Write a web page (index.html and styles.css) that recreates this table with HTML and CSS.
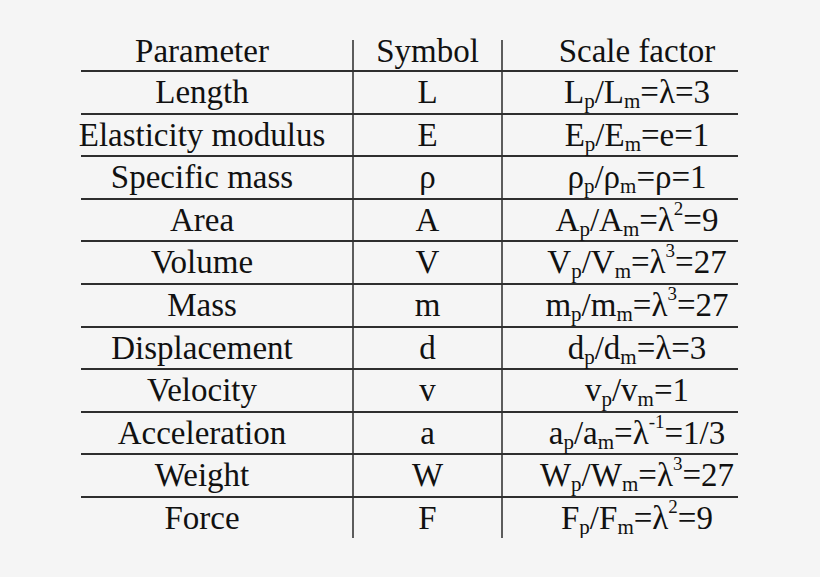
FILE: index.html
```html
<!DOCTYPE html>
<html>
<head>
<meta charset="utf-8">
<link rel="stylesheet" href="styles.css">
</head>
<body>
<div class="page">
  <div class="table">
    <div class="row head">
      <div class="cell c1">Parameter</div>
      <div class="cell c2">Symbol</div>
      <div class="cell c3">Scale factor</div>
    </div>
    <div class="row">
      <div class="cell c1">Length</div>
      <div class="cell c2">L</div>
      <div class="cell c3"><span>L<sub>p</sub>/L<sub>m</sub>=λ=3</span></div>
    </div>
    <div class="row">
      <div class="cell c1">Elasticity modulus</div>
      <div class="cell c2">E</div>
      <div class="cell c3"><span>E<sub>p</sub>/E<sub>m</sub>=e=1</span></div>
    </div>
    <div class="row">
      <div class="cell c1">Specific mass</div>
      <div class="cell c2">ρ</div>
      <div class="cell c3"><span>ρ<sub>p</sub>/ρ<sub>m</sub>=ρ=1</span></div>
    </div>
    <div class="row">
      <div class="cell c1">Area</div>
      <div class="cell c2">A</div>
      <div class="cell c3"><span>A<sub>p</sub>/A<sub>m</sub>=λ<sup>2</sup>=9</span></div>
    </div>
    <div class="row">
      <div class="cell c1">Volume</div>
      <div class="cell c2">V</div>
      <div class="cell c3"><span>V<sub>p</sub>/V<sub>m</sub>=λ<sup>3</sup>=27</span></div>
    </div>
    <div class="row">
      <div class="cell c1">Mass</div>
      <div class="cell c2">m</div>
      <div class="cell c3"><span>m<sub>p</sub>/m<sub>m</sub>=λ<sup>3</sup>=27</span></div>
    </div>
    <div class="row">
      <div class="cell c1">Displacement</div>
      <div class="cell c2">d</div>
      <div class="cell c3"><span>d<sub>p</sub>/d<sub>m</sub>=λ=3</span></div>
    </div>
    <div class="row">
      <div class="cell c1">Velocity</div>
      <div class="cell c2">v</div>
      <div class="cell c3"><span>v<sub>p</sub>/v<sub>m</sub>=1</span></div>
    </div>
    <div class="row">
      <div class="cell c1">Acceleration</div>
      <div class="cell c2">a</div>
      <div class="cell c3"><span>a<sub>p</sub>/a<sub>m</sub>=λ<sup>-1</sup>=1/3</span></div>
    </div>
    <div class="row">
      <div class="cell c1">Weight</div>
      <div class="cell c2">W</div>
      <div class="cell c3"><span>W<sub>p</sub>/W<sub>m</sub>=λ<sup>3</sup>=27</span></div>
    </div>
    <div class="row last">
      <div class="cell c1">Force</div>
      <div class="cell c2">F</div>
      <div class="cell c3"><span>F<sub>p</sub>/F<sub>m</sub>=λ<sup>2</sup>=9</span></div>
    </div>
  </div>
</div>
</body>
</html>
```

FILE: styles.css
```css
html, body {
  margin: 0;
  padding: 0;
  background: #f5f5f5;
}

.page {
  width: 820px;
  height: 577px;
  padding: 40px 0 0 81px;
  box-sizing: border-box;
  font-family: "Liberation Serif", "Times New Roman", serif;
  font-size: 33px;
  color: #111111;
}

.table {
  width: 657px;
}

.row {
  display: grid;
  grid-template-columns: 271px 149px 237px;
  height: 42.6px;
  box-sizing: border-box;
  border-bottom: 2px solid #2e2e2e;
  line-height: 40.6px;
}

.row.head {
  height: 32px;
  line-height: 22.3px;
}

.row.last {
  height: 40px;
  border-bottom: none;
  overflow: hidden;
}

.cell {
  display: flex;
  justify-content: center;
  white-space: nowrap;
}

.c1 {
  padding-right: 29px;
}

.c2 {
  border-left: 2px solid #5c5c5c;
}

.c3 {
  border-left: 2px solid #5c5c5c;
  padding-left: 33px;
}

sub, sup {
  line-height: 0;
}

sub {
  font-size: 21px;
  vertical-align: -5px;
}

sup {
  font-size: 19px;
  vertical-align: 16px;
}
```
